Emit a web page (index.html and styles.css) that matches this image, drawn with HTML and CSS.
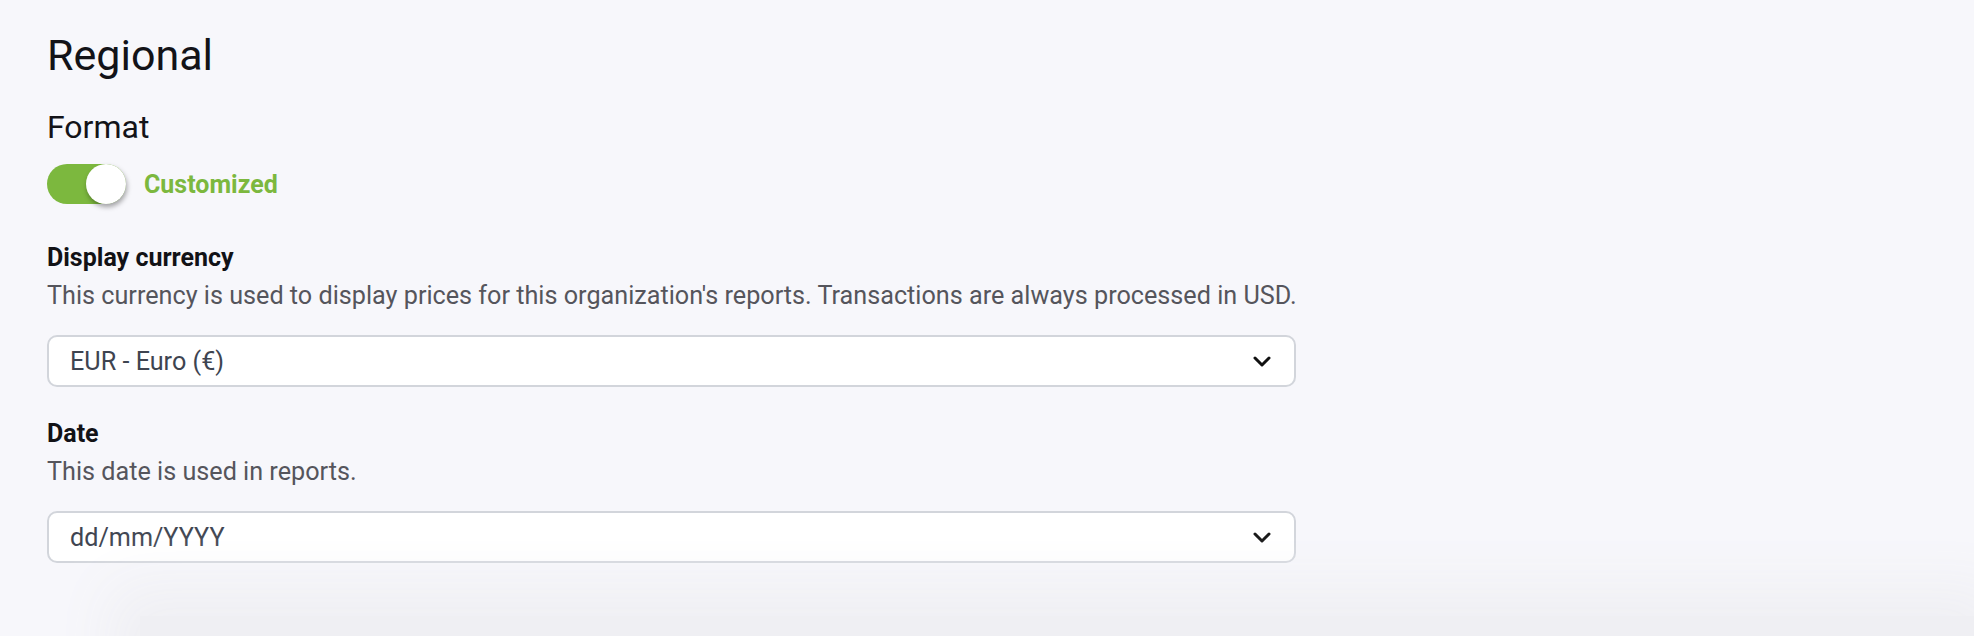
FILE: index.html
```html
<!DOCTYPE html>
<html lang="en">
<head>
<meta charset="utf-8">
<title>Regional</title>
<link rel="stylesheet" href="styles.css">
</head>
<body>
<main class="page">
  <h1 class="title">Regional</h1>
  <h2 class="subtitle">Format</h2>
  <div class="toggle-row">
    <div class="toggle"><span class="knob"></span></div>
    <span class="toggle-label">Customized</span>
  </div>

  <section class="field field-first">
    <div class="label">Display currency</div>
    <div class="desc">This currency is used to display prices for this organization's reports. Transactions are always processed in USD.</div>
    <div class="select">
      <span class="value">EUR - Euro (€)</span>
      <svg class="chev" width="18" height="11" viewBox="0 0 18 11"><path d="M2 2 L9 9 L16 2" fill="none" stroke="#111" stroke-width="3" stroke-linecap="round" stroke-linejoin="round"/></svg>
    </div>
  </section>

  <section class="field">
    <div class="label">Date</div>
    <div class="desc">This date is used in reports.</div>
    <div class="select">
      <span class="value">dd/mm/YYYY</span>
      <svg class="chev" width="18" height="11" viewBox="0 0 18 11"><path d="M2 2 L9 9 L16 2" fill="none" stroke="#111" stroke-width="3" stroke-linecap="round" stroke-linejoin="round"/></svg>
    </div>
  </section>
</main>
<div class="footer-shade"></div>
</body>
</html>
```

FILE: styles.css
```css
html, body {
  margin: 0;
  padding: 0;
  background: #f7f7fb;
  height: 100%;
  overflow: hidden;
}
body {
  font-family: Roboto, "Liberation Sans", sans-serif;
  color: #16161b;
}
.page {
  padding: 28px 0 0 47px;
  width: 1249px;
}
.title {
  margin: 0;
  font-size: 43px;
  line-height: 54px;
  font-weight: 400;
  color: #131318;
}
.subtitle {
  margin: 26px 0 0;
  font-size: 32px;
  line-height: 38px;
  font-weight: 400;
  color: #131318;
}
.toggle-row {
  margin-top: 18px;
  display: flex;
  align-items: center;
  gap: 18px;
}
.toggle {
  position: relative;
  width: 79px;
  height: 40px;
  border-radius: 20px;
  background: #7cb83e;
}
.knob {
  position: absolute;
  right: 0;
  top: 0;
  width: 40px;
  height: 40px;
  border-radius: 50%;
  background: #fff;
  box-shadow: 1px 3px 5px rgba(0, 0, 0, 0.35);
}
.toggle-label {
  font-size: 25px;
  font-weight: 700;
  color: #7cb83e;
}
.field {
  margin-top: 33px;
}
.field-first {
  margin-top: 40px;
}
.label {
  font-size: 25px;
  line-height: 28px;
  font-weight: 700;
  color: #121216;
}
.desc {
  margin-top: 10px;
  font-size: 25.2px;
  line-height: 28px;
  color: #55555c;
  white-space: nowrap;
}
.select {
  margin-top: 25px;
  height: 52px;
  box-sizing: border-box;
  border: 2px solid #d2d5db;
  border-radius: 10px;
  background: #fff;
  display: flex;
  align-items: center;
  justify-content: space-between;
  padding: 0 23px 0 21px;
}
.value {
  font-size: 25.2px;
  color: #3e4450;
}
.chev {
  display: block;
}
.footer-shade {
  position: fixed;
  left: 140px;
  right: 0;
  bottom: -40px;
  height: 60px;
  background: #efeff3;
  box-shadow: 0 0 60px 30px #efeff3;
}
```
